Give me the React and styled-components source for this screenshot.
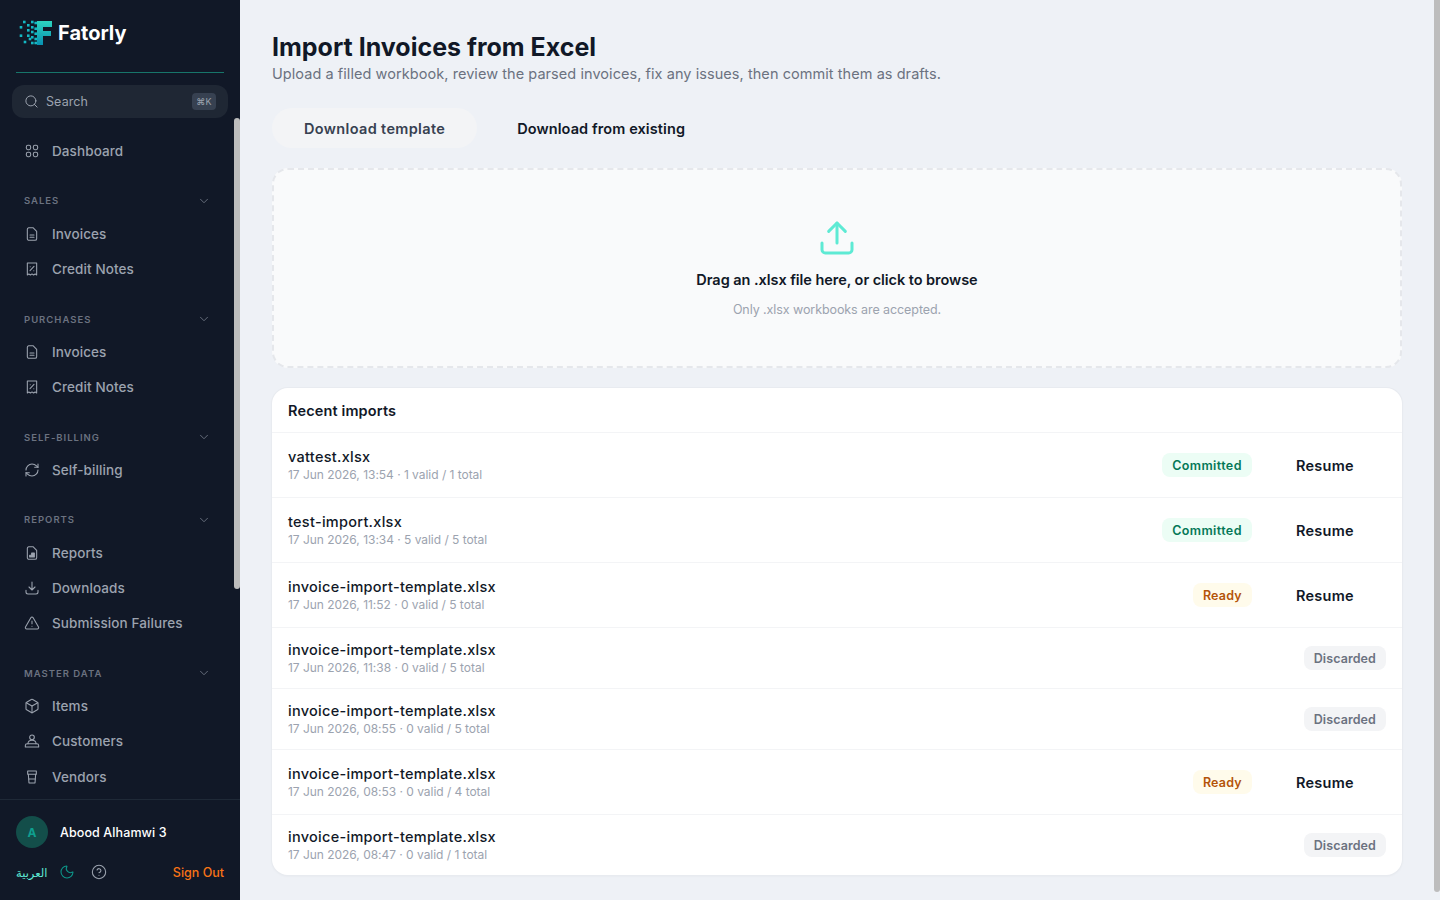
import React from "react";
import styled, { createGlobalStyle } from "styled-components";
import { Box, ChevronDown, CircleHelp, Moon, RefreshCw, Search, TriangleAlert, Upload } from "lucide-react";

const FONT = `"Inter", "Noto Sans", "Liberation Sans", sans-serif`;

const GlobalStyle = createGlobalStyle`
  body {
    margin: 0;
    background: #eef1f6;
    font-family: ${FONT};
  }
`;

const Shell = styled.div`
  display: flex;
`;

const Sidebar = styled.aside`
  position: fixed;
  top: 0;
  left: 0;
  bottom: 0;
  width: 240px;
  background: #111827;
  display: flex;
  flex-direction: column;
`;

const Brand = styled.div`
  height: 73px;
  margin: 0 16px;
  padding: 19px 0 0 3px;
  display: flex;
  align-items: flex-start;
  gap: 6px;
  border-bottom: 1px solid #17756a;
  box-sizing: border-box;
  flex-shrink: 0;
`;

const BrandName = styled.span`
  font-size: 20px;
  line-height: 29px;
  font-weight: 700;
  color: #fff;
`;

const SearchBox = styled.div`
  margin: 12px 12px 0;
  height: 33px;
  flex-shrink: 0;
  border-radius: 12px;
  background: #1f2734;
  display: flex;
  align-items: center;
  padding: 0 12px;
  color: #9ca3af;
  font-size: 12.5px;
  letter-spacing: 0.1px;
  gap: 7px;
`;

const SearchLabel = styled.span`
  flex: 1;
`;

const Kbd = styled.span`
  width: 24px;
  height: 17px;
  border-radius: 4px;
  background: #374151;
  color: #9ca3af;
  font-size: 9px;
  display: flex;
  align-items: center;
  justify-content: center;
`;

const Nav = styled.nav`
  flex: 1;
  min-height: 0;
  overflow-y: auto;
  scrollbar-width: none;
  padding: 15.3px 6px 0 0;
`;

const ScrollThumb = styled.div`
  position: ${(p) => (p.$page ? "fixed" : "absolute")};
  top: ${(p) => (p.$page ? 0 : "118px")};
  right: 0;
  width: 6px;
  height: ${(p) => (p.$page ? "892px" : "471px")};
  border-radius: ${(p) => (p.$page ? "0 0 3px 3px" : "3px")};
  background: #bdbdbd;
`;

const NavItem = styled.div`
  height: 35.4px;
  display: flex;
  align-items: center;
  gap: 12px;
  padding-left: 24px;
  color: #9ca3af;
  font-size: 13.5px;
  font-weight: 500;
  letter-spacing: 0.1px;
`;

const Section = styled.div`
  margin-top: 17.3px;
`;

const SectionHead = styled.div`
  height: 30px;
  display: flex;
  align-items: center;
  justify-content: space-between;
  padding: 0 23px 0 24px;
  color: #6b7280;
  font-size: 9.5px;
  font-weight: 600;
  letter-spacing: 1px;
`;

const Footer = styled.div`
  flex-shrink: 0;
  height: 101px;
  box-sizing: border-box;
  border-top: 1px solid #1f2937;
  padding: 16px 16px 0;
  display: flex;
  flex-direction: column;
`;

const UserRow = styled.div`
  display: flex;
  align-items: center;
  gap: 12px;
`;

const Avatar = styled.div`
  width: 32px;
  height: 32px;
  border-radius: 50%;
  background: #134e4a;
  color: #0f9f8f;
  font-size: 12px;
  font-weight: 700;
  display: flex;
  align-items: center;
  justify-content: center;
`;

const UserName = styled.span`
  color: #fff;
  font-size: 12.5px;
  font-weight: 500;
  letter-spacing: 0.1px;
`;

const FooterActions = styled.div`
  margin-top: 14px;
  height: 20px;
  display: flex;
  align-items: center;
`;

const LangLink = styled.span`
  color: #5eead4;
  font-size: 11.5px;
  font-family: "Noto Sans", "DejaVu Sans", sans-serif;
  margin-right: 12px;
`;

const MoonButton = styled.span`
  display: flex;
  color: #0d9488;
  margin-right: 16px;
`;

const HelpButton = styled.span`
  display: flex;
  color: #9ca3af;
`;

const SignOut = styled.span`
  margin-left: auto;
  color: #f97316;
  font-size: 12.5px;
  font-weight: 500;
`;

const Main = styled.main`
  margin: 0 6px 0 240px;
  flex: 1;
  padding: 32px 32px 32px;
  min-width: 0;
`;

const Title = styled.h1`
  margin: 0;
  font-size: 25px;
  line-height: 30px;
  font-weight: 700;
  color: #111827;
`;

const Subtitle = styled.p`
  margin: 0;
  font-size: 14.5px;
  line-height: 23px;
  color: #6b7280;
  letter-spacing: 0.06px;
`;

const Tabs = styled.div`
  margin-top: 23px;
  display: flex;
  align-items: center;
`;

const Tab = styled.div`
  height: 40px;
  padding: 0 32px;
  display: flex;
  align-items: center;
  border-radius: 20px;
  font-size: 14.5px;
  font-weight: 600;
  letter-spacing: ${(p) => (p.$active ? "0.35px" : "0.1px")};
  background: ${(p) => (p.$active ? "#f3f4f6" : "transparent")};
  color: ${(p) => (p.$active ? "#374151" : "#111827")};
  margin-right: 8px;
`;

const DropZone = styled.div`
  margin-top: 20px;
  height: 200px;
  box-sizing: border-box;
  border: 2px dashed #e5e7eb;
  border-radius: 16px;
  background: #f9fafb;
  display: flex;
  flex-direction: column;
  align-items: center;
  color: #5eead4;
  padding-top: 48px;
`;

const DropTitle = styled.div`
  margin-top: 11px;
  font-size: 14.5px;
  line-height: 22px;
  font-weight: 600;
  color: #111827;
  letter-spacing: -0.05px;
`;

const DropHint = styled.div`
  margin-top: 8px;
  font-size: 12.5px;
  line-height: 21px;
  color: #9ca3af;
  letter-spacing: -0.08px;
`;

const Card = styled.section`
  margin-top: 20px;
  background: #fff;
  border-radius: 16px;
  box-shadow: 0 0 0 1px #e8ebf0, 0 1px 3px rgba(17, 24, 39, 0.05);
  overflow: hidden;
`;

const CardHead = styled.div`
  height: 44px;
  padding: 0 16px;
  box-sizing: border-box;
  display: flex;
  align-items: center;
  font-size: 14.5px;
  font-weight: 600;
  color: #111827;
  letter-spacing: 0.14px;
`;

const Row = styled.div`
  height: ${(p) => (p.$tall ? 65 : 61)}px;
  border-top: 1px solid #f3f4f6;
  padding: 0 16px;
  display: flex;
  align-items: center;
  box-sizing: border-box;
`;

const FileInfo = styled.div`
  flex: 1;
  min-width: 0;
`;

const FileName = styled.div`
  font-size: 14.5px;
  line-height: 18px;
  font-weight: 500;
  color: #111827;
  letter-spacing: 0.28px;
`;

const FileMeta = styled.div`
  font-size: 12px;
  line-height: 17px;
  color: #9ca3af;
  letter-spacing: -0.03px;
`;

const BADGE = {
  committed: { bg: "#ecfdf5", fg: "#047857", ls: "0.4px" },
  ready: { bg: "#fffbeb", fg: "#b45309", ls: "0.2px" },
  discarded: { bg: "#f3f4f6", fg: "#6b7280", ls: "0.1px" },
};

const Badge = styled.span`
  height: 24px;
  padding: 0 10px;
  border-radius: 8px;
  display: flex;
  align-items: center;
  font-size: 12.5px;
  font-weight: 600;
  letter-spacing: ${(p) => BADGE[p.$kind].ls};
  background: ${(p) => BADGE[p.$kind].bg};
  color: ${(p) => BADGE[p.$kind].fg};
`;

const Resume = styled.span`
  margin: 0 32px 0 44px;
  font-size: 14.5px;
  font-weight: 600;
  color: #111827;
  letter-spacing: 0.3px;
`;

// logo: pixels fading out to the left of a solid F
const LOGO_PIXELS = [
  [5.3, 3], [13.3, 3], [16.7, 4], [9.3, 6.3], [2, 8.3], [13.3, 8.3], [16.7, 9.7],
  [9.3, 11.3], [13.3, 13], [16.7, 14.7], [2, 16.7], [9.3, 16.7], [13.3, 18.3],
  [16.7, 20], [11, 20], [6, 23], [13.3, 24], [16.7, 24],
];

const Logo = () => (
  <svg width="33" height="27" viewBox="0 0 33 27">
    <defs>
      <linearGradient id="logoFill" x1="0" y1="0" x2="0" y2="1">
        <stop offset="0" stopColor="#2dd4bf" />
        <stop offset="1" stopColor="#0891b2" />
      </linearGradient>
    </defs>
    {LOGO_PIXELS.map(([x, y]) => (
      <rect key={`${x}-${y}`} x={x - 1.3} y={y - 1.3} width="2.6" height="2.6" fill="#14b8c4" />
    ))}
    <path d="M18 2h15v6h-9v4h8v5h-8v9h-6z" fill="url(#logoFill)" />
  </svg>
);

const IconSvg = styled.svg`
  flex-shrink: 0;
  fill: none;
  stroke: currentColor;
  stroke-width: 1.6;
  stroke-linecap: round;
  stroke-linejoin: round;
`;

const Glyph = ({ children }) => (
  <IconSvg width="16" height="16" viewBox="0 0 24 24">
    {children}
  </IconSvg>
);

const DashboardIcon = () => (
  <Glyph>
    <rect x="3.5" y="3.5" width="6.5" height="6.5" rx="2.4" />
    <rect x="14" y="3.5" width="6.5" height="6.5" rx="2.4" />
    <rect x="3.5" y="14" width="6.5" height="6.5" rx="2.4" />
    <rect x="14" y="14" width="6.5" height="6.5" rx="2.4" />
  </Glyph>
);

const InvoiceIcon = () => (
  <Glyph>
    <path d="M7 2.5h6.5l5.5 5.5v11a2.5 2.5 0 0 1-2.5 2.5h-9A2.5 2.5 0 0 1 5 19V5a2.5 2.5 0 0 1 2-2.5z" />
    <path d="M9 13.5h6M9 17h6" />
  </Glyph>
);

const CreditIcon = () => (
  <Glyph>
    <path d="M5 3h14v18l-2.3-1.6-2.4 1.6-2.3-1.6-2.3 1.6-2.4-1.6L5 21z" />
    <path d="M9 14.5l6-6.5M9.3 8.5h.01M14.7 14.5h.01" />
  </Glyph>
);

const ReportIcon = () => (
  <Glyph>
    <path d="M7 2.5h6.5l5.5 5.5v11a2.5 2.5 0 0 1-2.5 2.5h-9A2.5 2.5 0 0 1 5 19V5a2.5 2.5 0 0 1 2-2.5z" />
    <path d="M8.5 18v-2.5h3V12h4v6z" fill="currentColor" />
  </Glyph>
);

const DownloadIcon = () => (
  <Glyph>
    <path d="M12 3v12M7.5 10.5 12 15l4.5-4.5" />
    <path d="M3 15.5V18a3 3 0 0 0 3 3h12a3 3 0 0 0 3-3v-2.5" />
  </Glyph>
);

const CustomerIcon = () => (
  <Glyph>
    <circle cx="12" cy="6.5" r="3.5" />
    <path d="M6 16c0-3 2.5-5 6-5s6 2 6 5" />
    <path d="M2 21v-2.2A2.8 2.8 0 0 1 4.8 16h14.4a2.8 2.8 0 0 1 2.8 2.8V21z" />
  </Glyph>
);

const VendorIcon = () => (
  <Glyph>
    <path d="M5.5 3h13v5h-13z" />
    <path d="M6.5 8l1 13h9l1-13" />
    <path d="M7 15h10" />
  </Glyph>
);

const GROUPS = [
  {
    title: "SALES",
    items: [
      [InvoiceIcon, "Invoices"],
      [CreditIcon, "Credit Notes"],
    ],
  },
  {
    title: "PURCHASES",
    items: [
      [InvoiceIcon, "Invoices"],
      [CreditIcon, "Credit Notes"],
    ],
  },
  { title: "SELF-BILLING", items: [[() => <RefreshCw size={16} strokeWidth={1.6} />, "Self-billing"]] },
  {
    title: "REPORTS",
    items: [
      [ReportIcon, "Reports"],
      [DownloadIcon, "Downloads"],
      [() => <TriangleAlert size={16} strokeWidth={1.6} />, "Submission Failures"],
    ],
  },
  {
    title: "MASTER DATA",
    items: [
      [() => <Box size={16} strokeWidth={1.6} />, "Items"],
      [CustomerIcon, "Customers"],
      [VendorIcon, "Vendors"],
    ],
  },
];

const IMPORTS = [
  { name: "vattest.xlsx", meta: "17 Jun 2026, 13:54 · 1 valid / 1 total", status: "committed", label: "Committed", resume: true },
  { name: "test-import.xlsx", meta: "17 Jun 2026, 13:34 · 5 valid / 5 total", status: "committed", label: "Committed", resume: true },
  { name: "invoice-import-template.xlsx", meta: "17 Jun 2026, 11:52 · 0 valid / 5 total", status: "ready", label: "Ready", resume: true },
  { name: "invoice-import-template.xlsx", meta: "17 Jun 2026, 11:38 · 0 valid / 5 total", status: "discarded", label: "Discarded" },
  { name: "invoice-import-template.xlsx", meta: "17 Jun 2026, 08:55 · 0 valid / 5 total", status: "discarded", label: "Discarded" },
  { name: "invoice-import-template.xlsx", meta: "17 Jun 2026, 08:53 · 0 valid / 4 total", status: "ready", label: "Ready", resume: true },
  { name: "invoice-import-template.xlsx", meta: "17 Jun 2026, 08:47 · 0 valid / 1 total", status: "discarded", label: "Discarded" },
];

const App = () => {
  return (
    <Shell>
      <GlobalStyle />
      <Sidebar>
        <Brand>
          <Logo />
          <BrandName>Fatorly</BrandName>
        </Brand>
        <SearchBox>
          <Search size={15} strokeWidth={1.6} />
          <SearchLabel>Search</SearchLabel>
          <Kbd>⌘K</Kbd>
        </SearchBox>
        <Nav>
          <NavItem>
            <DashboardIcon />
            Dashboard
          </NavItem>
          {GROUPS.map((group) => (
            <Section key={group.title}>
              <SectionHead>
                {group.title}
                <ChevronDown size={14} strokeWidth={1.6} />
              </SectionHead>
              {group.items.map(([Icon, label]) => (
                <NavItem key={label}>
                  <Icon />
                  {label}
                </NavItem>
              ))}
            </Section>
          ))}
        </Nav>
        <ScrollThumb />
        <Footer>
          <UserRow>
            <Avatar>A</Avatar>
            <UserName>Abood Alhamwi 3</UserName>
          </UserRow>
          <FooterActions>
            <LangLink>العربية</LangLink>
            <MoonButton>
              <Moon size={16} strokeWidth={1.6} />
            </MoonButton>
            <HelpButton>
              <CircleHelp size={16} strokeWidth={1.6} />
            </HelpButton>
            <SignOut>Sign Out</SignOut>
          </FooterActions>
        </Footer>
      </Sidebar>
      <Main>
        <Title>Import Invoices from Excel</Title>
        <Subtitle>
          Upload a filled workbook, review the parsed invoices, fix any issues, then commit them as drafts.
        </Subtitle>
        <Tabs>
          <Tab $active>Download template</Tab>
          <Tab>Download from existing</Tab>
        </Tabs>
        <DropZone>
          <Upload size={40} strokeWidth={1.8} />
          <DropTitle>Drag an .xlsx file here, or click to browse</DropTitle>
          <DropHint>Only .xlsx workbooks are accepted.</DropHint>
        </DropZone>
        <Card>
          <CardHead>Recent imports</CardHead>
          {IMPORTS.map((item) => (
            <Row key={item.meta} $tall={item.resume}>
              <FileInfo>
                <FileName>{item.name}</FileName>
                <FileMeta>{item.meta}</FileMeta>
              </FileInfo>
              <Badge $kind={item.status}>{item.label}</Badge>
              {item.resume && <Resume>Resume</Resume>}
            </Row>
          ))}
        </Card>
      </Main>
      <ScrollThumb $page />
    </Shell>
  );
};

export default App;
